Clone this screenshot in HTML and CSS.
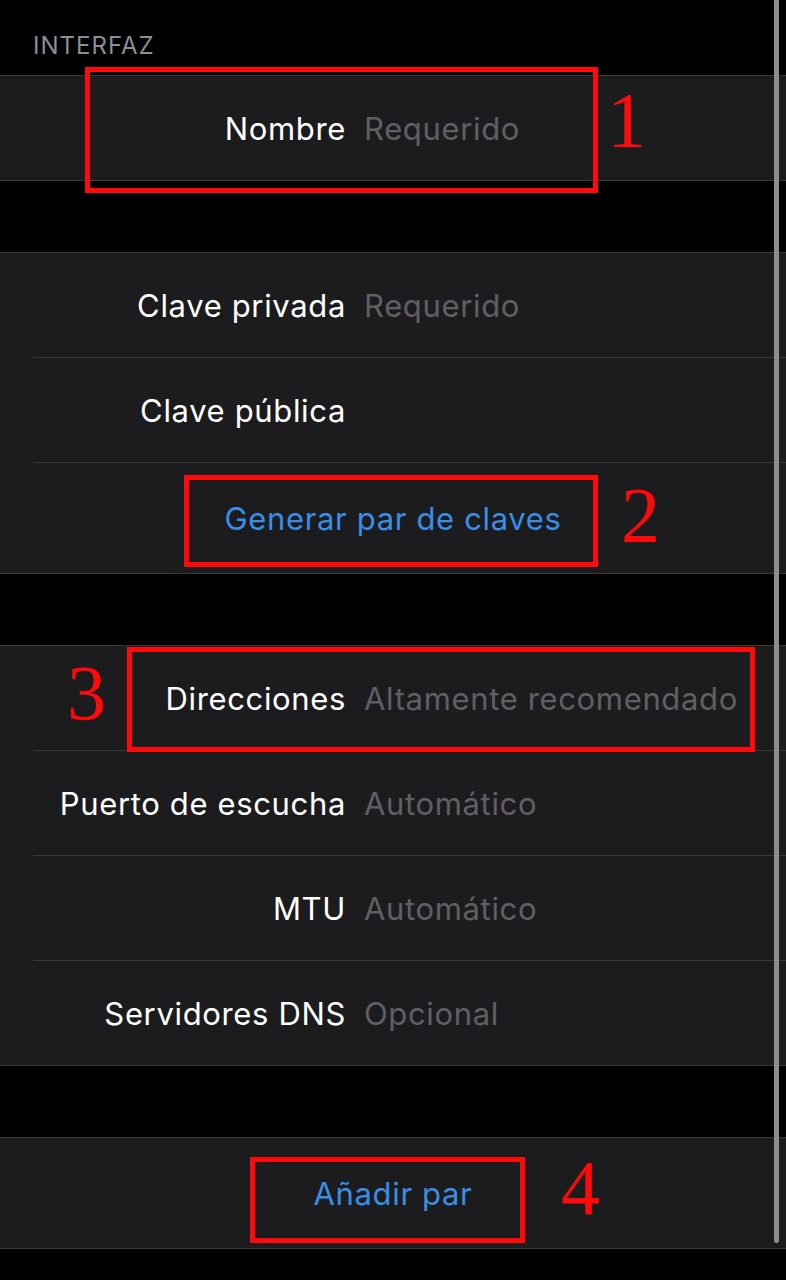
FILE: index.html
```html
<!DOCTYPE html>
<html lang="es">
<head>
<meta charset="utf-8">
<title>Interfaz</title>
<link rel="stylesheet" href="styles.css">
</head>
<body>
<div class="screen">
  <div class="group-header">INTERFAZ</div>

  <section class="group">
    <div class="row"><span class="label">Nombre</span><span class="value">Requerido</span></div>
  </section>

  <section class="group">
    <div class="row"><span class="label">Clave privada</span><span class="value">Requerido</span></div>
    <div class="sep"></div>
    <div class="row"><span class="label">Clave pública</span><span class="value"></span></div>
    <div class="sep"></div>
    <div class="row row-button"><span class="action">Generar par de claves</span></div>
  </section>

  <section class="group">
    <div class="row"><span class="label">Direcciones</span><span class="value">Altamente recomendado</span></div>
    <div class="sep"></div>
    <div class="row"><span class="label">Puerto de escucha</span><span class="value">Automático</span></div>
    <div class="sep"></div>
    <div class="row"><span class="label">MTU</span><span class="value">Automático</span></div>
    <div class="sep"></div>
    <div class="row"><span class="label">Servidores DNS</span><span class="value">Opcional</span></div>
  </section>

  <section class="group">
    <div class="row row-button"><span class="action">Añadir par</span></div>
  </section>

  <div class="scrollbar"></div>

  <div class="mark mark-1"></div>
  <div class="mark mark-2"></div>
  <div class="mark mark-3"></div>
  <div class="mark mark-4"></div>
  <div class="num num-1">1</div>
  <div class="num num-2">2</div>
  <div class="num num-3">3</div>
  <div class="num num-4">4</div>
</div>
</body>
</html>
```

FILE: styles.css
```css
html, body {
  margin: 0;
  padding: 0;
  background: #000;
}

.screen {
  position: relative;
  width: 786px;
  height: 1280px;
  overflow: hidden;
  background: #000;
  font-family: Inter, "Noto Sans", sans-serif;
  -webkit-font-smoothing: antialiased;
}

.group-header {
  height: 75px;
  box-sizing: border-box;
  padding: 32px 0 0 33px;
  font-size: 24px;
  line-height: 28px;
  color: #8d8d93;
  letter-spacing: 1px;
}

.group {
  background: #1c1c1e;
  border-top: 1px solid #39393b;
  border-bottom: 1px solid #39393b;
  margin-bottom: 71px;
}

.row {
  display: flex;
  align-items: center;
  height: 104px;
  font-size: 31px;
  letter-spacing: 0.65px;
}

.row-button {
  height: 110px;
  justify-content: center;
}

.label {
  width: 346px;
  flex: none;
  text-align: right;
  color: #fff;
}

.value {
  margin-left: 18px;
  color: #606064;
  white-space: nowrap;
}

.action {
  color: #3a8ee6;
}

.sep {
  height: 1px;
  margin-left: 33px;
  background: #39393b;
}

.scrollbar {
  position: absolute;
  left: 774px;
  top: 0;
  width: 5px;
  height: 1243px;
  border-radius: 0 0 3px 3px;
  background: #8c8c8c;
}

.mark {
  position: absolute;
  box-sizing: border-box;
  border: 5px solid #ff0a0a;
}

.mark-1 { left: 85px; top: 67px; width: 513px; height: 126px; }
.mark-2 { left: 184px; top: 475px; width: 414px; height: 92px; }
.mark-3 { left: 127px; top: 647px; width: 628px; height: 105px; }
.mark-4 { left: 250px; top: 1157px; width: 275px; height: 86px; }

.num {
  position: absolute;
  font-family: "Liberation Serif", "Times New Roman", serif;
  font-size: 78px;
  line-height: 78px;
  color: #ff0a0a;
}

.num-1 { left: 607px; top: 81px; }
.num-2 { left: 621px; top: 476px; }
.num-3 { left: 67px; top: 654px; }
.num-4 { left: 561px; top: 1149px; }
```
